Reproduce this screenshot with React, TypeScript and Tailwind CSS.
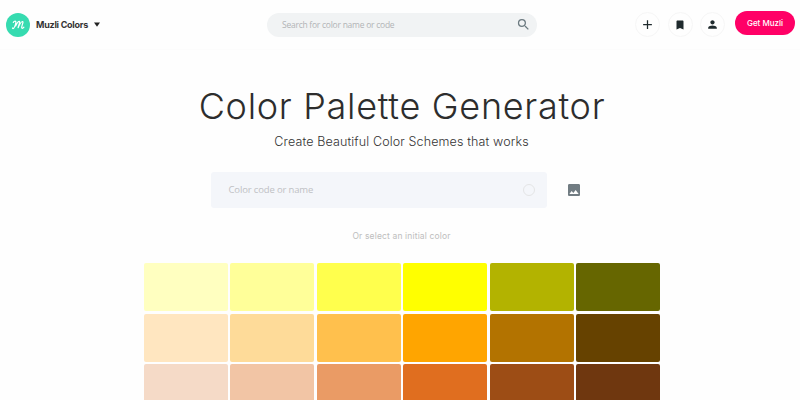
import React from 'react';

const rows = [
  ['bg-[#ffffc0]', 'bg-[#ffff99]', 'bg-[#ffff4d]', 'bg-[#ffff00]', 'bg-[#b3b300]', 'bg-[#666600]'],
  ['bg-[#ffe6c0]', 'bg-[#fedb99]', 'bg-[#ffc04d]', 'bg-[#ffa500]', 'bg-[#b37300]', 'bg-[#664200]'],
  ['bg-[#f5dac7]', 'bg-[#f2c5a5]', 'bg-[#ea9b65]', 'bg-[#e06e1f]', 'bg-[#9d4d15]', 'bg-[#6f370f]'],
];

function RoundButton({ children }: { children: React.ReactNode }) {
  return (
    <button className="flex h-[25px] w-[25px] items-center justify-center rounded-full border border-[#f6f6f6] text-[#1f2a2d]">
      {children}
    </button>
  );
}

export default function App() {
  return (
    <div className="h-[400px] w-[800px] overflow-hidden bg-[#fefefe] font-['Inter',sans-serif]">
      {/* Top bar */}
      <header className="flex h-[50px] items-center border-b border-[#fcfcfc] pr-[5px] pl-[6px]">
        <div className="flex w-[261px] items-center">
          <svg className="h-6 w-6" viewBox="0 0 24 24" fill="none">
            <circle cx="12" cy="12" r="12" fill="#36dbb0" />
            <path
              d="M7.300 9.400c.6-1.200 2-1.600 2.500-.8.500 1.200-1.200 5.900-2.200 6.800-.6.500-1.300.1-1-.4M9.600 13c1-2.200 2.600-4.800 3.700-4.700 1.200.2-.7 4.300-1.200 6.400 1.200-2.700 3.200-6.300 4.500-6.200 1.300.2-1.300 4.900-.9 6.400.3.900 1.500.2 2.200-.7"
              stroke="#fff"
              strokeWidth="1.200"
              strokeLinecap="round"
              strokeLinejoin="round"
            />
          </svg>
          <span className="ml-[6px] w-[52px] text-[9px] leading-3 font-bold tracking-[-0.25px] whitespace-nowrap text-[#333]">
            Muzli Colors
          </span>
          <svg className="ml-[5.500px] h-[5px] w-[6px]" viewBox="0 0 6 5">
            <path d="M0 .5h6L3 4.800z" fill="#222" />
          </svg>
        </div>

        <div className="flex h-6 w-[270px] items-center justify-between rounded-full bg-[#f1f3f4] pr-[6px] pl-[15px]">
          <span className="font-['Open_Sans',sans-serif] text-[8.500px] leading-3 tracking-[-0.25px] whitespace-nowrap text-[#b1b4b6]">
            Search for color name or code
          </span>
          <svg className="mb-[1px] h-[15px] w-[15px]" viewBox="0 0 24 24" fill="#6c7a80">
            <path d="M15.500 14h-.79l-.28-.27A6.470 6.470 0 0 0 16 9.500 6.500 6.500 0 1 0 9.500 16c1.610 0 3.090-.59 4.230-1.570l.27.28v.79l5 4.990L20.490 19l-4.990-5zm-6 0C7.010 14 5 11.990 5 9.500S7.010 5 9.500 5 14 7.010 14 9.500 11.990 14 9.500 14z" />
          </svg>
        </div>

        <div className="ml-auto flex items-center">
          <div className="flex gap-[7.500px]">
            <RoundButton>
              <svg className="h-[15px] w-[15px]" viewBox="0 0 24 24" fill="currentColor">
                <path d="M19 13h-6v6h-2v-6H5v-2h6V5h2v6h6v2z" />
              </svg>
            </RoundButton>
            <RoundButton>
              <svg className="h-[12px] w-[12px]" viewBox="0 0 24 24" fill="currentColor">
                <path d="M17 3H7c-1.100 0-2 .9-2 2v16l7-3 7 3V5c0-1.100-.9-2-2-2z" />
              </svg>
            </RoundButton>
            <RoundButton>
              <svg className="h-[13px] w-[13px]" viewBox="0 0 24 24" fill="currentColor">
                <path d="M12 12c2.210 0 4-1.790 4-4s-1.790-4-4-4-4 1.790-4 4 1.790 4 4 4zm0 2c-2.670 0-8 1.340-8 4v2h16v-2c0-2.660-5.330-4-8-4z" />
              </svg>
            </RoundButton>
          </div>
          <button className="mb-[3px] ml-[10px] h-6 w-[60px] rounded-full bg-[#ff0066] text-[8px] leading-6 font-medium whitespace-nowrap text-white">
            Get Muzli
          </button>
        </div>
      </header>

      {/* Title and color input */}
      <main className="flex flex-col items-center">
        <h1 className="mt-[32px] ml-[4px] text-[36px] leading-[48px] font-light tracking-[0.700px] whitespace-nowrap text-[#2d2d2d]">
          Color Palette Generator
        </h1>
        <p className="mt-[3px] ml-[3px] text-[12.500px] leading-[18px] font-light tracking-[0.130px] whitespace-nowrap text-[#333]">
          Create Beautiful Color Schemes that works
        </p>

        <div className="mt-[21px] ml-[-8px] flex h-9 items-center">
          <div className="flex h-9 w-[336px] items-center justify-between rounded-[3px] bg-[#f4f6fa] pr-[12px] pl-[18px]">
            <span className="font-['Open_Sans',sans-serif] text-[9.500px] leading-3 tracking-[-0.15px] whitespace-nowrap text-[#bfc1c4]">
              Color code or name
            </span>
            <span className="h-3 w-3 rounded-full border border-[#e4e5e6]"></span>
          </div>
          <svg className="ml-[19px] h-4 w-4" viewBox="0 0 24 24" fill="#717c82">
            <path d="M21 19V5c0-1.100-.9-2-2-2H5c-1.100 0-2 .9-2 2v14c0 1.100.9 2 2 2h14c1.100 0 2-.9 2-2zM8.500 13.500l2.500 3.010L14.500 12l4.500 6H5l3.500-4.500z" />
          </svg>
        </div>

        <p className="mt-[22px] ml-[3px] text-[8.500px] leading-3 tracking-[0.150px] whitespace-nowrap text-[#bdbdbd]">
          Or select an initial color
        </p>

        {/* Initial colors */}
        <div className="mt-[21px] ml-[4px] flex w-[516px] flex-col gap-[2.500px]">
          {rows.map((row, i) => (
            <div key={i} className="grid grid-cols-6 gap-[2.400px]">
              {row.map((color) => (
                <div key={color} className={`h-[48px] rounded-[2px] ${color}`}></div>
              ))}
            </div>
          ))}
        </div>
      </main>
    </div>
  );
}
